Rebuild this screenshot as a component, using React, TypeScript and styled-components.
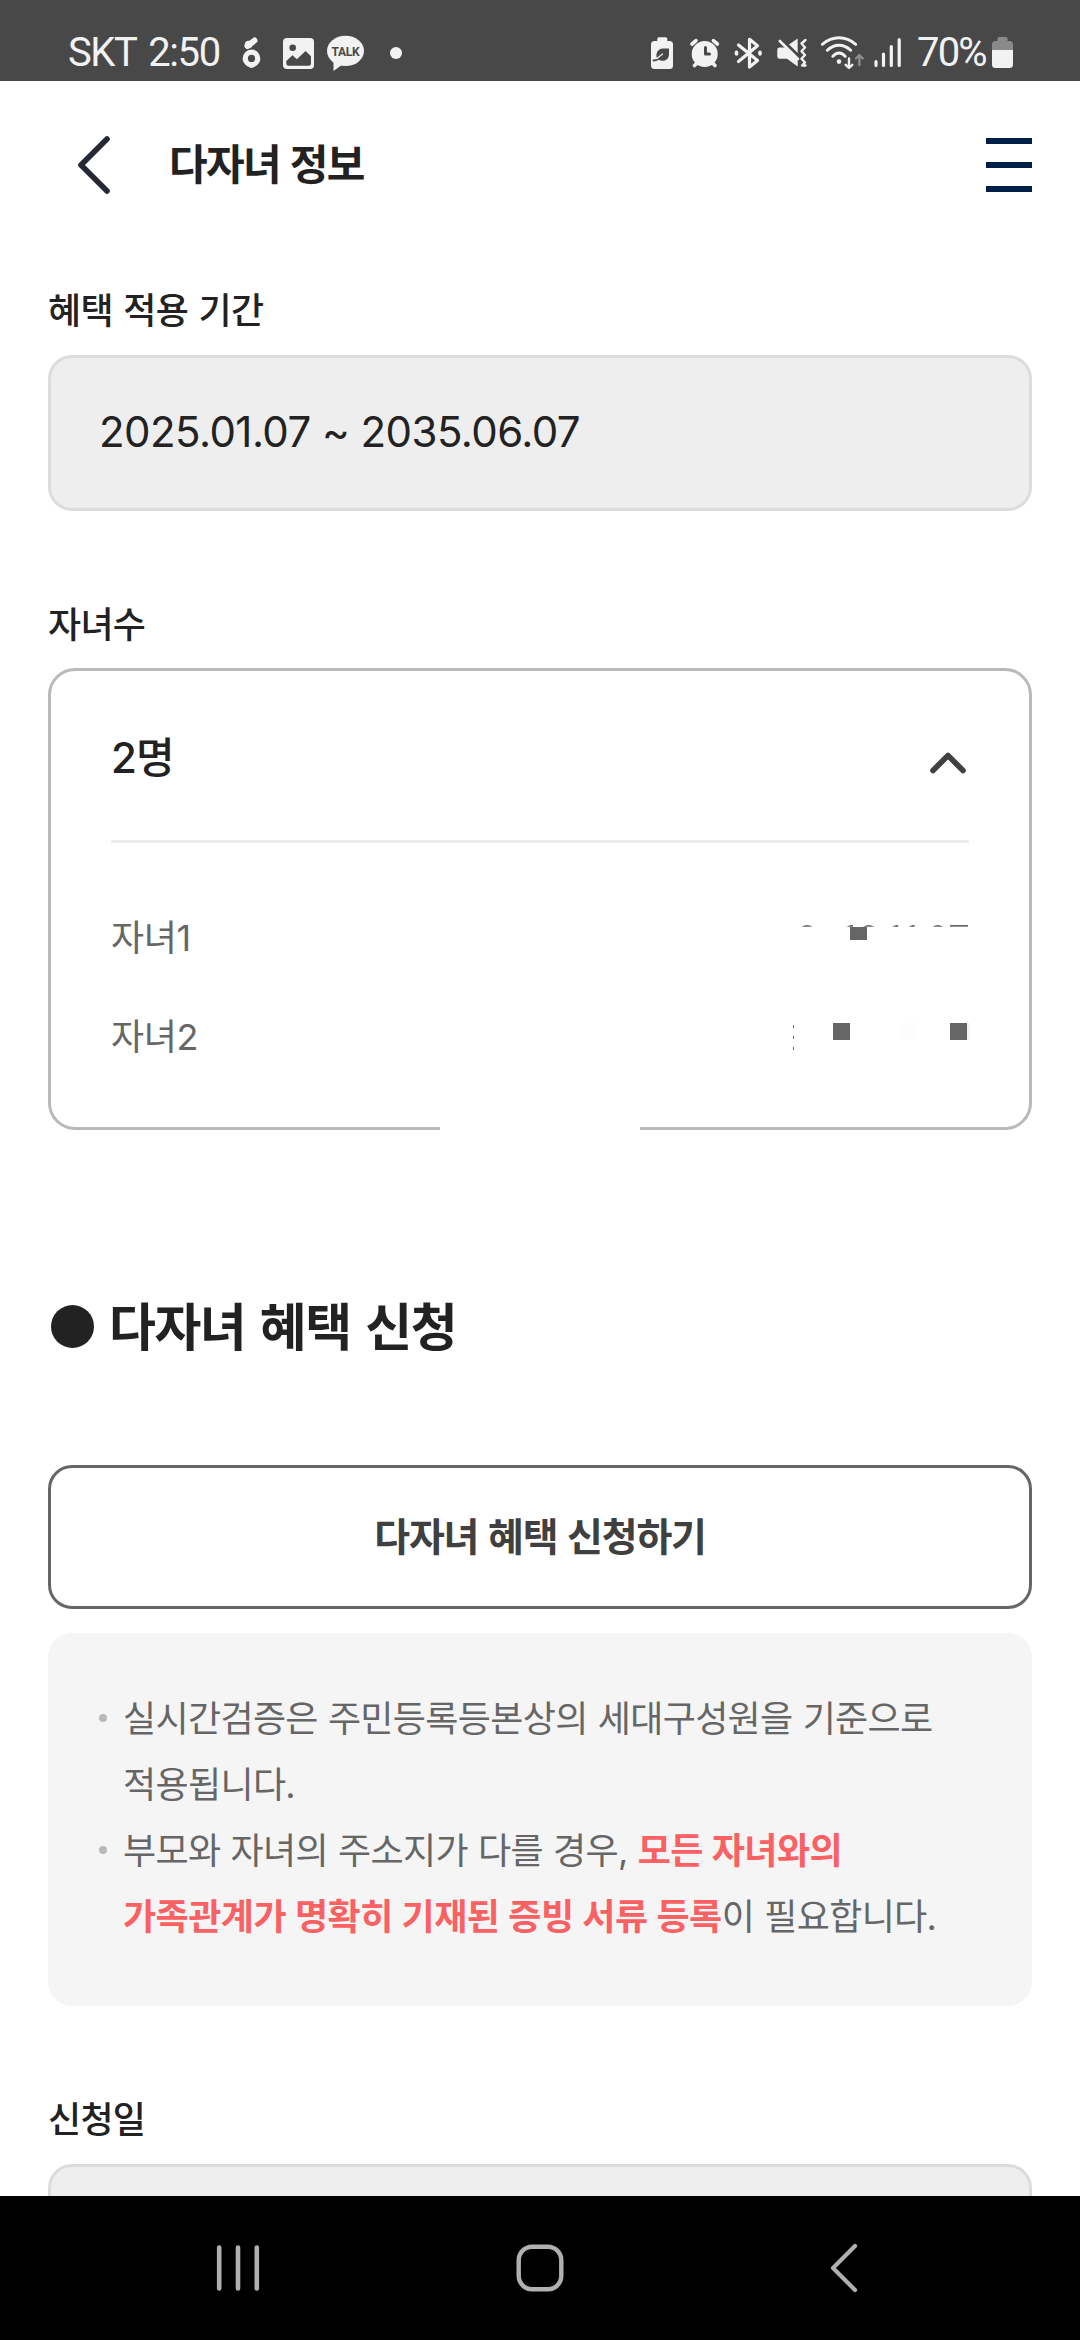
import React from "react";
import styled, { createGlobalStyle } from "styled-components";

const GlobalStyle = createGlobalStyle`
  * { box-sizing: border-box; }
  body { margin: 0; background: #fff; }
`;

const Screen = styled.div`
  width: 1080px;
  height: 2340px;
  display: flex;
  flex-direction: column;
  overflow: hidden;
  background: #fff;
  color: #222;
  font-family: Inter, "Noto Sans CJK KR", sans-serif;
`;

/* ---------- status bar ---------- */

const StatusBar = styled.div`
  flex: none;
  height: 81px;
  padding: 0 67px 0 68px;
  display: flex;
  justify-content: space-between;
  background: #484848;
  color: #f2f2f2;
  overflow: hidden;
`;

const StatusGroup = styled.div`
  display: flex;
`;

const StatusText = styled.span<{ $width: number; $spacing: number; $indent?: number }>`
  width: ${(p) => p.$width}px;
  height: 81px;
  padding-left: ${(p) => p.$indent ?? 0}px;
  font: 400 40px/106px Roboto, sans-serif;
  letter-spacing: ${(p) => p.$spacing}px;
  word-spacing: 4px;
  white-space: nowrap;
`;

const Glyph = styled.svg<{ $gap?: number }>`
  flex: none;
  display: block;
  margin-left: ${(p) => p.$gap ?? 0}px;
  overflow: visible;
`;

const INK = "#f2f2f2";
const BAR = "#484848";

const StatusIcon = ({
  x,
  width,
  gap,
  children,
}: {
  x: number;
  width: number;
  gap: number;
  children: React.ReactNode;
}) => (
  <Glyph $gap={gap} width={width} height={81} viewBox={`${x} 0 ${width} 81`} fill="none" strokeLinecap="round" strokeLinejoin="round">
    {children}
  </Glyph>
);

/* ---------- page header ---------- */

const Header = styled.header`
  flex: none;
  height: 168px;
  padding: 0 48px 0 78px;
  display: flex;
  align-items: center;
`;

const Title = styled.h1`
  flex: 1;
  margin: 0 0 1px 59px;
  font-size: 42px;
  line-height: 60px;
  font-weight: 700;
  letter-spacing: -1.6px;
  word-spacing: 1.3px;
`;

const MenuButton = styled.div`
  width: 46px;
  height: 54px;
  display: flex;
  flex-direction: column;
  justify-content: space-between;
`;

const MenuLine = styled.i`
  height: 6px;
  background: #002048;
`;

/* ---------- form ---------- */

const Content = styled.main`
  flex: 1;
  min-height: 0;
  overflow: hidden;
  padding: 35px 48px 0;
`;

const Field = styled.section<{ $gap: number }>`
  margin-bottom: ${(p) => p.$gap}px;
`;

const Label = styled.div<{ $gap: number }>`
  margin-bottom: ${(p) => p.$gap}px;
  font-size: 36px;
  line-height: 54px;
  font-weight: 500;
  letter-spacing: -0.7px;
  word-spacing: 1.5px;
`;

const ReadonlyInput = styled.div`
  height: 156px;
  padding: 0 48px 2px 48px;
  display: flex;
  align-items: center;
  border: 3px solid #dcdcdc;
  border-radius: 24px;
  background: #eee;
  font-size: 42px;
  line-height: 60px;
  letter-spacing: -0.55px;
  white-space: nowrap;
`;

const ChildCard = styled.div`
  height: 462px;
  padding: 0 60px;
  border: 3px solid #b9b9b9;
  border-radius: 27px;
  position: relative;
`;

/* blank patch that interrupts the bottom edge of the card */
const EdgeGap = styled.span`
  position: absolute;
  left: 389px;
  bottom: -3px;
  width: 200px;
  height: 3px;
  background: #fff;
`;

const CardHead = styled.div`
  height: 172px;
  padding-top: 4px;
  display: flex;
  align-items: center;
  justify-content: space-between;
  border-bottom: 3px solid #ebebeb;
  font-size: 42px;
  line-height: 60px;
  font-weight: 500;
  letter-spacing: -0.8px;
`;

const ChevronUp = styled.svg`
  display: block;
  margin: 10px 3px 0 0;
`;

const ChildList = styled.div`
  padding-top: 45px;
`;

const ChildRow = styled.div`
  height: 99px;
  display: flex;
  align-items: center;
  justify-content: space-between;
  color: #666;
  font-size: 36px;
  line-height: 54px;
  letter-spacing: -0.4px;
`;

const Masked = styled.svg`
  display: block;
  overflow: visible;
`;

/* ---------- apply section ---------- */

const Heading = styled.h2`
  margin: 0 0 98px;
  padding-left: 3px;
  height: 78px;
  display: flex;
  align-items: center;
  gap: 15px;
  font-size: 51px;
  line-height: 78px;
  font-weight: 700;
  letter-spacing: -1.5px;
  word-spacing: 4px;
`;

const Bullet = styled.i`
  width: 43px;
  height: 43px;
  margin-bottom: 3px;
  border-radius: 50%;
  background: #222;
`;

const ApplyButton = styled.button`
  display: block;
  width: 100%;
  height: 144px;
  margin: 0 0 24px;
  padding: 0;
  border: 3px solid #666;
  border-radius: 24px;
  background: #fff;
  color: #404040;
  font: 700 39px/60px Inter, "Noto Sans CJK KR", sans-serif;
  letter-spacing: -1.2px;
  word-spacing: 1.7px;
`;

const Notice = styled.ul`
  height: 373px;
  margin: 0 0 87px;
  padding: 53px 51px 0;
  list-style: none;
  border-radius: 24px;
  background: #f5f5f5;
  color: #666;
`;

const NoticeItem = styled.li`
  display: flex;
  font-size: 36px;
  line-height: 66px;
  letter-spacing: -0.65px;
  word-spacing: 0.6px;
  white-space: nowrap;

  &::before {
    content: "";
    flex: none;
    width: 8px;
    height: 8px;
    margin: 28px 16px 0 0;
    border-radius: 50%;
    background: #b9b9b9;
  }
`;

const Strong = styled.strong`
  font-weight: 700;
  letter-spacing: -0.5px;
  word-spacing: 0.8px;
  color: #f96163;
`;

/* ---------- system navigation ---------- */

const NavBar = styled.nav`
  flex: none;
  height: 144px;
  padding: 0 222px 0 216px;
  display: flex;
  align-items: center;
  justify-content: space-between;
  background: #000;
`;

const grey = "#666";

export default function App() {
  return (
    <Screen>
      <GlobalStyle />
      <StatusBar>
        <StatusGroup>
          <StatusText $width={173} $spacing={-1.4}>SKT 2:50</StatusText>
          <StatusIcon x={241} width={22} gap={0}>
            <path d="M247.5 46 L254.5 40.5" stroke={INK} strokeWidth="6" />
            <circle cx="248.6" cy="44.6" r="3.8" fill={INK} />
            <path d="M251.5 49.6a8.8 8.8 0 0 1 8.8 8.8c0 4-2.4 6.2-5.4 8.2q-3.4 2.6-6.8 0c-3-2-5.4-4.2-5.4-8.2a8.8 8.8 0 0 1 8.8-8.8z" fill={INK} />
            <circle cx="251.5" cy="58.4" r="3.6" fill={BAR} />
          </StatusIcon>
          <StatusIcon x={283} width={31} gap={20}>
            <rect x="283" y="38" width="31" height="31" rx="4" fill={INK} />
            <circle cx="292.7" cy="47.7" r="3.3" fill={BAR} />
            <path d="M286.3 61 292.5 55.3 296.8 59.2 305.6 51 311 56.2V63.500a2.2 2.2 0 0 1-2.2 2.2H288.5a2.2 2.2 0 0 1-2.2-2.2z" fill={BAR} />
          </StatusIcon>
          <StatusIcon x={327} width={37} gap={13}>
            <ellipse cx="345.5" cy="50.9" rx="18.5" ry="15.2" fill={INK} />
            <path d="M333.5 61v10l9-6.5z" fill={INK} />
            <text x="345.5" y="56" textAnchor="middle" fontFamily="Roboto, sans-serif" fontWeight="700" fontSize="12" letterSpacing="-0.3" fill={BAR}>TALK</text>
          </StatusIcon>
          <StatusIcon x={390} width={12} gap={26}>
            <circle cx="396" cy="53" r="6" fill={INK} />
          </StatusIcon>
        </StatusGroup>
        <StatusGroup>
          <StatusIcon x={651} width={22} gap={0}>
            <rect x="657.3" y="37.3" width="10" height="6" rx="1.5" fill={INK} />
            <rect x="651" y="41" width="22" height="28" rx="3.5" fill={INK} />
            <path d="M656.5 57c-.8-4.500 2-8.300 6-8.600h6.500v5.600c0 4.600-3 6.800-6.500 6.800q-2.400 0-4-1.200z" fill={BAR} />
            <path d="M653.5 60.500c4 0 6-1.500 9-5.500" stroke={BAR} strokeWidth="1.8" />
            <path d="M657 58.5 662.5 54" stroke={INK} strokeWidth="1.2" />
          </StatusIcon>
          <StatusIcon x={690} width={29} gap={17}>
            <circle cx="704.7" cy="54" r="13" fill={INK} />
            <path d="M692 44 696 40.7M713.4 40.7 717.4 44M694.5 65.5 697 63M715 65.5 712.5 63" stroke={INK} strokeWidth="3.6" />
            <path d="M705.5 47.5V54H709.5" stroke={BAR} strokeWidth="3" />
          </StatusIcon>
          <StatusIcon x={735} width={27} gap={16}>
            <path d="M738.5 45 757.5 60.5 749.5 67V39.3L757.5 45.7 738.5 61.5" stroke={INK} strokeWidth="3.2" />
            <path d="M736.5 52.3v1.6M760 52.3v1.6" stroke={INK} strokeWidth="3.6" />
          </StatusIcon>
          <StatusIcon x={777} width={30} gap={15}>
            <path d="M779.5 47.5H786L797.7 59.5V66.5L787 58.7H779.5Q777.3 58.7 777.3 56.5V49.7Q777.3 47.5 779.5 47.5z" fill={INK} />
            <path d="M779.8 41 798 59" stroke={INK} strokeWidth="2.6" />
            <path d="M789 44.5 797.7 38.5V53z" fill={INK} />
            <path d="M805.5 40 801.5 43.5 805 47.5 801.5 51.3 805 55 801.5 58.7 805 62.5 802 65.5H805.5" stroke={INK} strokeWidth="2.4" />
          </StatusIcon>
          <StatusIcon x={820} width={45} gap={13}>
            <path d="M822.3 44.3Q830 37.8 839 37.8T855.7 44.3M827.3 50.3Q832.5 45.2 839 45.2T850.7 50.3M832.8 56.3Q835.5 53 839 53T845.2 56.3" stroke={INK} strokeWidth="2.9" />
            <circle cx="839" cy="61.6" r="2.3" fill={INK} />
            <path d="M849 58.5V67.5M845.7 64.8 849 68 852.3 64.8" stroke={INK} strokeWidth="2.4" />
            <path d="M859.4 65V55.5M856 58.5 859.4 55 862.8 58.5" stroke="#8c8c8c" strokeWidth="2.4" />
          </StatusIcon>
          <StatusIcon x={874} width={28} gap={9}>
            <path d="M876 61.7V65.5M883.5 54V65.5M891.3 46.5V65.5M899.2 39.5V65.5" stroke={INK} strokeWidth="3.2" />
          </StatusIcon>
          <StatusText $width={90} $spacing={-1.8} $indent={15}>70%</StatusText>
          <StatusIcon x={992} width={21} gap={0}>
            <rect x="997.5" y="37" width="10" height="6" rx="1.5" fill="#8a8a8a" />
            <path d="M992 50V44.500a3.5 3.5 0 0 1 3.5-3.5h14a3.5 3.5 0 0 1 3.5 3.5V50z" fill="#8a8a8a" />
            <path d="M992 50h21V64.500a3.5 3.5 0 0 1-3.5 3.5h-14a3.5 3.5 0 0 1-3.5-3.5z" fill={INK} />
          </StatusIcon>
        </StatusGroup>
      </StatusBar>

      <Header>
        <Glyph width={32} height={58} viewBox="0 0 32 58" fill="none">
          <path d="M29 3 3 29 29 55" stroke="#262833" strokeWidth="5.6" strokeLinecap="round" strokeLinejoin="round" />
        </Glyph>
        <Title>다자녀 정보</Title>
        <MenuButton>
          <MenuLine />
          <MenuLine />
          <MenuLine />
        </MenuButton>
      </Header>

      <Content>
        <Field $gap={87}>
          <Label $gap={17}>혜택 적용 기간</Label>
          <ReadonlyInput>2025.01.07 ~ 2035.06.07</ReadonlyInput>
        </Field>

        <Field $gap={159}>
          <Label $gap={16}>자녀수</Label>
          <ChildCard>
            <CardHead>
              2명
              <ChevronUp width={36} height={22} viewBox="0 0 36 22" fill="none">
                <path d="M3 18.5 18 3.5 33 18.5" stroke="#404040" strokeWidth="5.6" strokeLinecap="round" strokeLinejoin="round" />
              </ChevronUp>
            </CardHead>
            <ChildList>
              <ChildRow>
                자녀1
                <Masked width={176} height={28} viewBox="793 924 176 28" fill={grey}>
                  <path d="M801.5 926.700q5.5-3.200 11 0zM846.5 926.700l4-1.700h2.500v1.700zM863 926.700q5.500-3.200 11.500 0zM892 926.700l4-1.700h2.200v1.700zM908.500 926.700l4-1.700h2.200v1.700zM932.500 926.700q5.500-3.200 10.500 0z" />
                  <rect x="950" y="925" width="18" height="1.7" />
                  <rect x="850" y="927" width="17" height="13" />
                </Masked>
              </ChildRow>
              <ChildRow>
                자녀2
                <Masked width={176} height={28} viewBox="793 1023 176 28" fill={grey}>
                  <path d="M793 1025h1v3h-1zM793 1036h1v3h-1zM793 1047h1v3h-1z" />
                  <rect x="833" y="1023" width="17" height="17" />
                  <rect x="900" y="1023" width="17" height="17" fill="#fdfdfd" />
                  <rect x="950" y="1023" width="17" height="17" />
                  <rect x="967" y="1023" width="3" height="17" fill="#f3f3f3" />
                </Masked>
              </ChildRow>
            </ChildList>
            <EdgeGap />
          </ChildCard>
        </Field>

        <Heading>
          <Bullet />
          다자녀 혜택 신청
        </Heading>
        <ApplyButton>다자녀 혜택 신청하기</ApplyButton>
        <Notice>
          <NoticeItem>
            <div>
              실시간검증은 주민등록등본상의 세대구성원을 기준으로
              <br />
              적용됩니다.
            </div>
          </NoticeItem>
          <NoticeItem>
            <div>
              부모와 자녀의 주소지가 다를 경우, <Strong>모든 자녀와의</Strong>
              <br />
              <Strong>가족관계가 명확히 기재된 증빙 서류 등록</Strong>이 필요합니다.
            </div>
          </NoticeItem>
        </Notice>

        <Field $gap={0}>
          <Label $gap={17}>신청일</Label>
          <ReadonlyInput />
        </Field>
      </Content>

      <NavBar>
        <Glyph width={44} height={48} viewBox="0 0 44 48" fill="none">
          <path d="M3.2 3.5V44.5M22 3.5V44.5M40.8 3.5V44.5" stroke="#b0b0b0" strokeWidth="4.6" strokeLinecap="round" />
        </Glyph>
        <Glyph $gap={-10} width={48} height={48} viewBox="0 0 48 48" fill="none">
          <rect x="2.7" y="2.7" width="42.6" height="42.6" rx="13.5" stroke="#b0b0b0" strokeWidth="4.4" />
        </Glyph>
        <Glyph width={28} height={50} viewBox="0 0 28 50" fill="none">
          <path d="M25 3 3 25 25 47" stroke="#b0b0b0" strokeWidth="4.2" strokeLinecap="round" strokeLinejoin="round" />
        </Glyph>
      </NavBar>
    </Screen>
  );
}
